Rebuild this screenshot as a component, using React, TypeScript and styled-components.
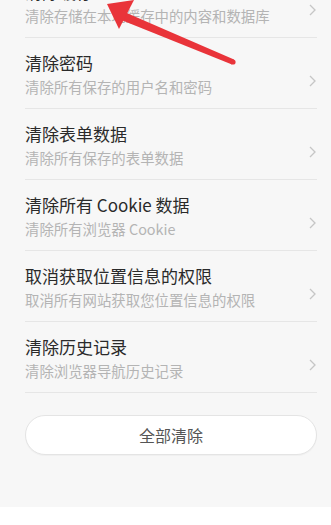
import * as React from "react";
import styled, { createGlobalStyle } from "styled-components";

const GlobalStyle = createGlobalStyle`
  html, body {
    margin: 0;
    padding: 0;
    background: #ffffff;
  }
  body {
    font-family: "Noto Sans CJK SC", "Noto Sans", "Liberation Sans", sans-serif;
  }
`;

const Page = styled.div`
  position: relative;
  height: 507px;
  overflow: hidden;
  background: #f7f7f7;
`;

const List = styled.div`
  margin-top: -33px;
  display: flex;
  flex-direction: column;
`;

const Row = styled.div`
  display: flex;
  align-items: center;
  margin: 0 14px 0 25px;
  padding: 14px 1px 12px 0;
  border-bottom: 1px solid #e6e6e6;
`;

const Texts = styled.div`
  flex: 1;
  display: flex;
  flex-direction: column;
`;

const Title = styled.div`
  font-size: 17px;
  line-height: 22px;
  color: #2a2a2a;
`;

const Sub = styled.div`
  margin-top: 4px;
  font-size: 14.4px;
  line-height: 18px;
  color: #b4b4b4;
`;

const Chevron = styled.svg`
  width: 7px;
  height: 12px;
  margin-top: 14px;
  flex-shrink: 0;
`;

const ButtonWrap = styled.div`
  padding: 22px 14px 0 25px;
`;

const ClearButton = styled.div`
  height: 38px;
  border: 1px solid #e4e4e4;
  border-radius: 20px;
  background: #ffffff;
  display: flex;
  align-items: center;
  justify-content: center;
  font-size: 16px;
  color: #555555;
  box-shadow: 0 1px 1px rgba(0, 0, 0, 0.03);
`;

const Arrow = styled.svg`
  position: absolute;
  left: 0;
  top: 0;
  width: 331px;
  height: 80px;
  pointer-events: none;
`;

const items = [
  { title: "清除缓存", sub: "清除存储在本地缓存中的内容和数据库" },
  { title: "清除密码", sub: "清除所有保存的用户名和密码" },
  { title: "清除表单数据", sub: "清除所有保存的表单数据" },
  { title: "清除所有 Cookie 数据", sub: "清除所有浏览器 Cookie" },
  { title: "取消获取位置信息的权限", sub: "取消所有网站获取您位置信息的权限" },
  { title: "清除历史记录", sub: "清除浏览器导航历史记录" },
];

function SettingRow(props: { title: string; sub: string }): JSX.Element {
  return (
    <Row>
      <Texts>
        <Title>{props.title}</Title>
        <Sub>{props.sub}</Sub>
      </Texts>
      <Chevron viewBox="0 0 7 12">
        <path d="M1 1 L6 6 L1 11" fill="none" stroke="#c6c6c6" strokeWidth="1.3" />
      </Chevron>
    </Row>
  );
}

export default function App(): JSX.Element {
  return (
    <>
      <GlobalStyle />
      <Page>
        <List>
          {items.map((item, index) => (
            <SettingRow key={index} title={item.title} sub={item.sub} />
          ))}
        </List>
        <ButtonWrap>
          <ClearButton>全部清除</ClearButton>
        </ButtonWrap>
        <Arrow viewBox="0 0 331 80">
          <polygon points="125.5,12.5 234,59.5 232,64.5 122.5,20.5" fill="#e9343a" />
          <circle cx="233" cy="62" r="2.6" fill="#e9343a" />
          <polygon points="107,4 134,0 119,29" fill="#e9343a" />
        </Arrow>
      </Page>
    </>
  );
}
